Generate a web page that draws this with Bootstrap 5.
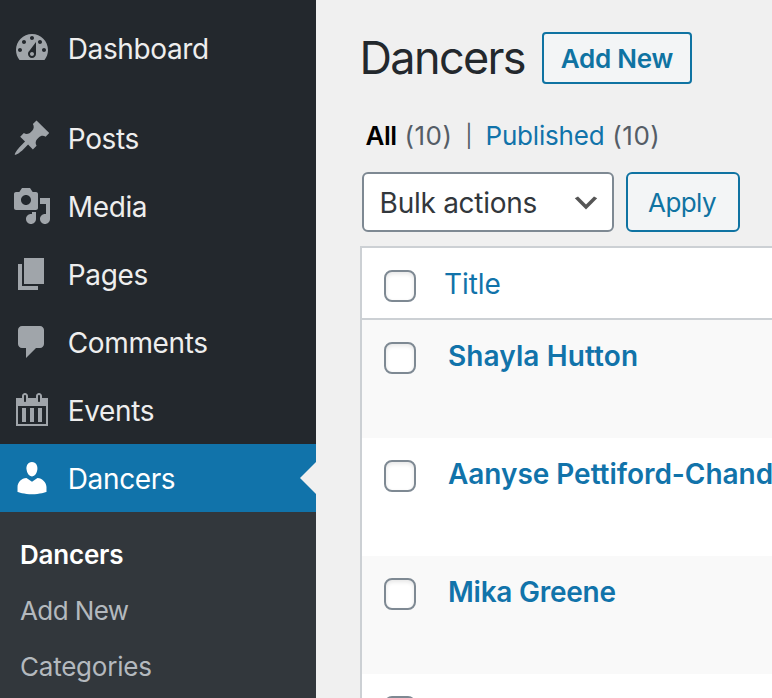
<!DOCTYPE html>
<html lang="en">
<head>
<meta charset="utf-8">
<meta name="viewport" content="width=device-width, initial-scale=1">
<title>Dancers</title>
<link rel="stylesheet" href="https://cdn.jsdelivr.net/npm/bootstrap@5.3.0/dist/css/bootstrap.min.css">
<style>
  body { font-family: Inter, "Liberation Sans", sans-serif; background: #f0f0f0; color: #23282d; height: 698px; font-size: 26px; }
  a { text-decoration: none; }
  .side { width: 316px; background: #23282d; padding-top: 14px; }
  .side .nav-link { height: 68px; padding: 1px 0 0 12px; font-size: 28px; letter-spacing: -.38px; color: #eee; }
  .side .nav-link svg { width: 40px; height: 40px; fill: #a0a5aa; margin: -1px 15.8px 0 0; }
  .side .gap-after { margin-bottom: 22px; }
  .side .nav-link.active { background: #1173aa; color: #fff; }
  .side .nav-link.active svg { fill: #fff; }
  .side .nav-link.active::after { content: ""; position: absolute; right: 0; top: 18px; border: 16px solid transparent; border-left: 0; border-right-color: #f0f0f0; }
  .submenu { background: #32373c; padding: 14px 0 0 20px; }
  .submenu a { height: 56px; line-height: 57px; color: #b4b9be; letter-spacing: -.22px; }
  .submenu a.current { color: #fff; font-weight: 600; }
  .submenu a.tight { letter-spacing: -.6px; }
  .main { padding: 32px 0 0 46px; }
  .title-row { height: 52px; }
  .page-title { font-size: 45px; font-weight: 400; line-height: 52px; letter-spacing: -1.65px; width: 180px; margin: 0 0 0 -2.5px; }
  .btn-wp { border: 2px solid #0f73a2; border-radius: 6px; background: #f3f5f6; color: #0f73a2; font-size: 26px; line-height: 1; letter-spacing: -.6px; padding: 0; }
  .btn-add { width: 150px; height: 52px; border-radius: 4px; font-weight: 600; letter-spacing: -.25px; margin-left: 2.5px; padding-top: 1px; }
  .btn-apply { width: 114px; height: 60px; margin-left: 12px; padding: 1px 2px 0 0; }
  .views { height: 40px; line-height: 40px; margin: 32px 0 16px; padding-left: 3.5px; color: #555d66; white-space: nowrap; }
  .views b { font-weight: 600; color: #000; letter-spacing: -.5px; }
  .views i { font-style: normal; letter-spacing: .5px; }
  .views .bar { font-size: 22px; width: 33px; text-align: center; }
  .views a, .listing a { color: #1173aa; }
  .views a { letter-spacing: -.2px; }
  .bulk { width: 252px; height: 60px; border: 2px solid #7e8993; border-radius: 6px; background: #fff; color: #32373c; font-size: 28px; letter-spacing: -.27px; padding: 1px 10px 0 15.6px; }
  .bulk svg { width: 32px; height: 32px; fill: #555; }
  .listing { background: #fff; border: solid #ccd0d4; border-width: 2px 0 0 2px; margin: 14px 0 0 -2px; font-size: 28px; white-space: nowrap; }
  .listing .line { height: 118px; padding: 18px 0 0 22px; line-height: 36px; font-weight: 600; overflow: hidden; }
  .listing .line:nth-child(even) { background: #f9f9f9; }
  .listing .line.heading { height: 72px; border-bottom: 2px solid #ccd0d4; font-weight: 400; }
  .listing .line a { margin-left: 32px; letter-spacing: -.04px; }
  .listing .line.heading a { margin-left: 28px; letter-spacing: -.1px; }
  .listing .line .snug { letter-spacing: -.25px; }
  .listing .line .loose { letter-spacing: .1px; }
  .listing .form-check-input { width: 32px; height: 32px; margin: 4px 0 0; border: 2px solid #7e8993; border-radius: 8px; background: #fff; box-shadow: inset 0 2px 4px rgba(0,0,0,.1); }
</style>
</head>
<body class="d-flex overflow-hidden">
<aside class="side flex-shrink-0 d-flex flex-column">
  <nav class="nav flex-column">
    <a class="nav-link gap-after d-flex align-items-center" href="#"><svg viewBox="0 0 20 20"><path d="M3.76 16h12.48c1.1-1.37 1.76-3.11 1.76-5 0-4.42-3.58-8-8-8s-8 3.58-8 8c0 1.89.66 3.63 1.76 5zM10 4c.55 0 1 .45 1 1s-.45 1-1 1-1-.45-1-1 .45-1 1-1zM6 6c.55 0 1 .45 1 1s-.45 1-1 1-1-.45-1-1 .45-1 1-1zm8 0c.55 0 1 .45 1 1s-.45 1-1 1-1-.45-1-1 .45-1 1-1zm-5.37 5.55L12 7v6c0 1.1-.9 2-2 2s-2-.9-2-2c0-.57.24-1.08.63-1.45zM4 10c.55 0 1 .45 1 1s-.45 1-1 1-1-.45-1-1 .45-1 1-1zm12 0c.55 0 1 .45 1 1s-.45 1-1 1-1-.45-1-1 .45-1 1-1zm-5 3c0-.55-.45-1-1-1s-1 .45-1 1 .45 1 1 1 1-.45 1-1z"/></svg>Dashboard</a>
    <a class="nav-link d-flex align-items-center" href="#"><svg viewBox="0 0 20 20"><path d="M10.44 3.02l1.82-1.82 6.36 6.35-1.83 1.82c-1.05-.68-2.48-.57-3.41.36l-.75.75c-.92.93-1.04 2.35-.35 3.41l-1.83 1.82-2.41-2.41-2.8 2.79c-.42.42-3.38 2.71-3.8 2.29s1.86-3.39 2.28-3.81l2.79-2.79L4.1 9.36l1.83-1.82c1.05.69 2.48.57 3.4-.36l.75-.75c.93-.92 1.05-2.35.36-3.41z"/></svg>Posts</a>
    <a class="nav-link d-flex align-items-center" href="#"><svg viewBox="0 0 20 20"><path d="M13 11V4c0-.55-.45-1-1-1h-1.67L9 1H5L3.67 3H2c-.55 0-1 .45-1 1v7c0 .55.45 1 1 1h10c.55 0 1-.45 1-1zM7 4.5c1.38 0 2.5 1.12 2.5 2.5S8.38 9.5 7 9.5 4.500 8.38 4.500 7 5.620 4.500 7 4.500zM14 6h5v10.500c0 1.380-1.120 2.500-2.500 2.500S14 17.880 14 16.500s1.120-2.500 2.500-2.500c.17 0 .34.02.5.05V9h-3V6zm-4 8.050V13h2v3.500c0 1.380-1.120 2.500-2.500 2.500S7 17.880 7 16.500 8.120 14 9.500 14c.17 0 .34.02.5.05z"/></svg>Media</a>
    <a class="nav-link d-flex align-items-center" href="#"><svg viewBox="0 0 20 20"><path d="M6 15V2h10v13H6zm-1 1h8v2H3V5h2v11z"/></svg>Pages</a>
    <a class="nav-link d-flex align-items-center" href="#"><svg viewBox="0 0 20 20"><path d="M5 2h9c1.1 0 2 .9 2 2v7c0 1.1-.9 2-2 2h-2l-5 5v-5H5c-1.1 0-2-.9-2-2V4c0-1.1.9-2 2-2z"/></svg>Comments</a>
    <a class="nav-link d-flex align-items-center" href="#"><svg viewBox="0 0 20 20"><path d="M15 4h3v14H2V4h3V3c0-.83.67-1.500 1.500-1.500S8 2.170 8 3v1h4V3c0-.83.67-1.500 1.500-1.500S15 2.170 15 3v1zM6 3v2.500c0 .28.22.5.5.5s.5-.22.5-.5V3c0-.28-.22-.5-.5-.5S6 2.720 6 3zm7 0v2.500c0 .28.22.5.5.5s.5-.22.5-.5V3c0-.28-.22-.5-.5-.5s-.5.22-.5.5zm4 14V8H3v9h14zM7 16V9H5v7h2zm4 0V9H9v7h2zm4 0V9h-2v7h2z"/></svg>Events</a>
    <a class="nav-link active position-relative d-flex align-items-center" href="#"><svg viewBox="0 0 20 20"><path d="M10 9.250c-2.270 0-2.730-3.440-2.730-3.440C7 4.020 7.820 2 9.970 2c2.160 0 2.980 2.020 2.710 3.810 0 0-.41 3.440-2.680 3.440zm0 2.570L12.720 10c2.390 0 4.520 2.330 4.520 4.530v2.490s-3.650 1.130-7.240 1.130c-3.650 0-7.240-1.130-7.240-1.130v-2.490c0-2.250 1.940-4.480 4.470-4.480z"/></svg>Dancers</a>
  </nav>
  <div class="submenu flex-grow-1">
    <a class="current d-block" href="#">Dancers</a>
    <a class="tight d-block" href="#">Add New</a>
    <a class="d-block" href="#">Categories</a>
  </div>
</aside>
<main class="main flex-grow-1 overflow-hidden">
  <div class="title-row d-flex align-items-center">
    <h1 class="page-title">Dancers</h1>
    <a class="btn btn-wp btn-add d-flex align-items-center justify-content-center" href="#">Add New</a>
  </div>
  <div class="views d-flex">
    <b>All</b><i class="ms-2">(10)</i><span class="bar">|</span><a href="#">Published</a><i class="ms-2">(10)</i>
  </div>
  <div class="d-flex">
    <div class="bulk d-flex align-items-center justify-content-between" role="button"><span>Bulk actions</span><svg viewBox="0 0 20 20"><path d="M5 6l5 5 5-5 2 1-7 7-7-7 2-1z"/></svg></div>
    <button type="button" class="btn btn-wp btn-apply">Apply</button>
  </div>
  <div class="listing">
    <div class="line heading d-flex align-items-start"><input class="form-check-input flex-shrink-0" type="checkbox" aria-label="Select all"><a href="#">Title</a></div>
    <div class="line d-flex align-items-start"><input class="form-check-input flex-shrink-0" type="checkbox" aria-label="Select"><a class="loose" href="#">Shayla Hutton</a></div>
    <div class="line d-flex align-items-start"><input class="form-check-input flex-shrink-0" type="checkbox" aria-label="Select"><a href="#">Aanyse Pettiford-Chandler</a></div>
    <div class="line d-flex align-items-start"><input class="form-check-input flex-shrink-0" type="checkbox" aria-label="Select"><a class="snug" href="#">Mika Greene</a></div>
    <div class="line d-flex align-items-start"><input class="form-check-input flex-shrink-0" type="checkbox" aria-label="Select"></div>
  </div>
</main>
<script src="https://cdn.jsdelivr.net/npm/bootstrap@5.3.0/dist/js/bootstrap.bundle.min.js"></script>
</body>
</html>
